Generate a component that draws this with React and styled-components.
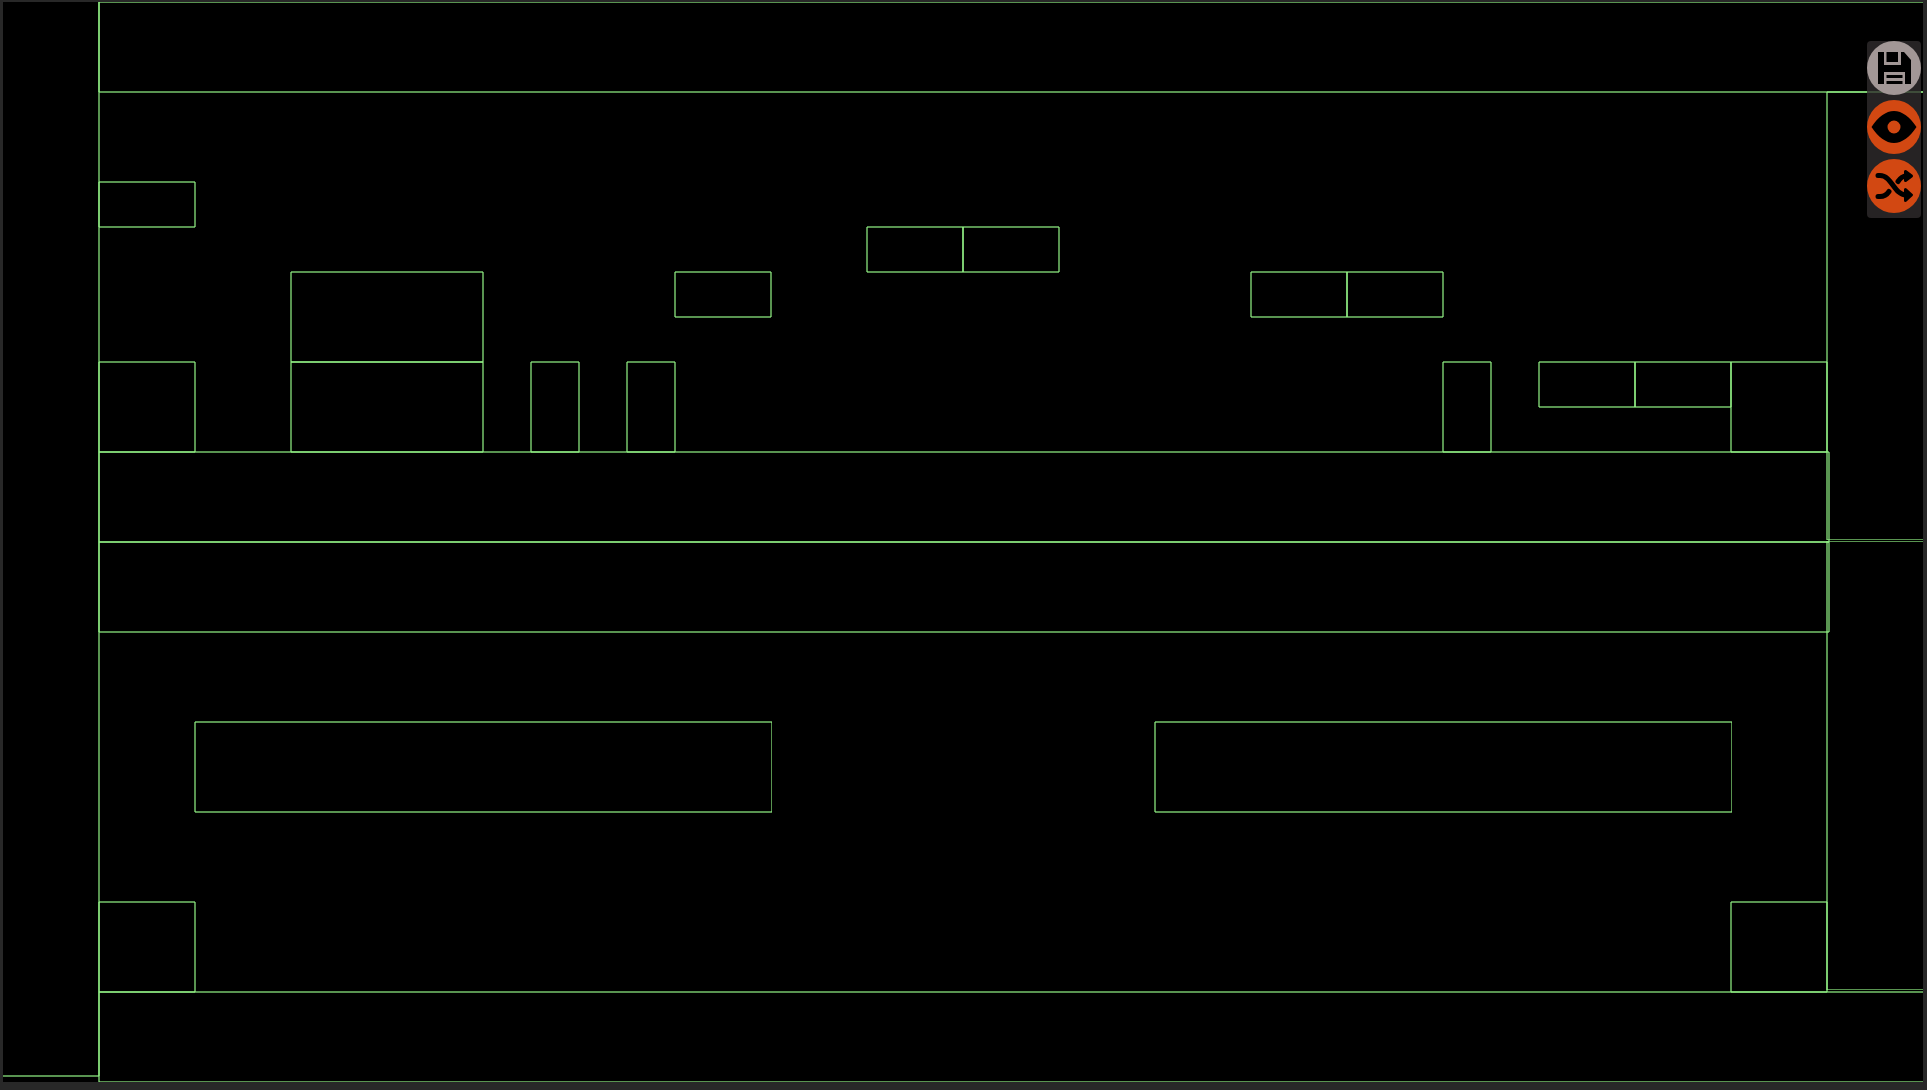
import React, { useState } from "react";
import styled, { createGlobalStyle } from "styled-components";

const GlobalStyle = createGlobalStyle`
  body {
    margin: 0;
    background: #282828;
    font-family: "Liberation Sans", Arial, sans-serif;
  }
`;

const Page = styled.main`
  position: relative;
  padding: 2px 4px 8px 3px;
`;

const Scene = styled.svg`
  display: block;
  width: 100%;
  height: auto;
  background: #000;
`;

const Edge = styled.line`
  stroke: #8fef82;
  stroke-opacity: 0.62;
`;

const Toolbar = styled.nav`
  position: absolute;
  top: 41px;
  right: 6px;
  display: flex;
  flex-direction: column;
  gap: 5px;
  padding-bottom: 5px;
  border-radius: 4px;
  background: rgba(48, 44, 45, 0.8);
`;

const RoundButton = styled.button`
  width: 54px;
  height: 54px;
  padding: 0;
  border: 0;
  border-radius: 50%;
  background: ${(p) => (p.$muted ? "#a29796" : "#d24812")};
  color: #000;
  cursor: pointer;
`;

const Icon = styled.svg`
  display: block;
  width: 54px;
  height: 54px;
`;

// Colliders as [left, top, right, bottom] in world units.
const COLLIDERS = [
  [-96, -96, 96, 1074],
  [96, 0, 2016, 90],
  [1824, 90, 2016, 537.5],
  [1824, 539.5, 2016, 987.5],
  [96, 990, 2016, 1080],
  [96, 180, 192, 225],
  [96, 360, 192, 450],
  [288, 270, 480, 360],
  [288, 360, 480, 450],
  [528, 360, 576, 450],
  [624, 360, 672, 450],
  [672, 270, 768, 315],
  [864, 225, 960, 270],
  [960, 225, 1056, 270],
  [1248, 270, 1344, 315],
  [1344, 270, 1440, 315],
  [1440, 360, 1488, 450],
  [1536, 360, 1632, 405],
  [1632, 360, 1728, 405],
  [1728, 360, 1824, 450],
  [96, 450, 1826, 540],
  [96, 540, 1826, 630],
  [192, 720, 768.5, 810],
  [1152, 720, 1728.5, 810],
  [96, 900, 192, 990],
  [1728, 900, 1824, 990],
];

// Edges on whole units cover the pixel on either side; others cover one.
const thickness = (v) => (Number.isInteger(v) ? 2 : 1);

function Collider({ box: [l, t, r, b] }) {
  const right = Math.ceil(r);
  const bottom = Math.ceil(b);
  const top = Math.floor(t);
  return (
    <g>
      <Edge x1={l} x2={right} y1={t} y2={t} strokeWidth={thickness(t)} />
      <Edge x1={r} x2={r} y1={top} y2={bottom} strokeWidth={thickness(r)} />
      <Edge x1={l} x2={right} y1={b} y2={b} strokeWidth={thickness(b)} />
      <Edge x1={l} x2={l} y1={top} y2={bottom} strokeWidth={thickness(l)} />
    </g>
  );
}

function SaveIcon() {
  return (
    <Icon viewBox="0 0 54 54" aria-hidden="true">
      <path
        fillRule="evenodd"
        d="M11 11h6v13h17V11h3l7 8v24h-6V31H17v12h-6z M19.500 11h11.500v10H19.500z M19.500 34h16v3H19.500z M19.500 40h16v3H19.500z"
      />
    </Icon>
  );
}

function EyeIcon() {
  return (
    <Icon viewBox="0 0 54 54" aria-hidden="true">
      <path
        fillRule="evenodd"
        d="M4.500 27C11 17 19 11 27 11s16 6 22.500 16C43 37 35 43 27 43S11 37 4.500 27z M27 20.500a6.500 6.500 0 1 0 0 13a6.500 6.500 0 1 0 0-13z"
      />
    </Icon>
  );
}

function ShuffleIcon() {
  return (
    <Icon viewBox="0 0 54 54" aria-hidden="true">
      <g fill="none" stroke="currentColor" strokeWidth="5" strokeLinecap="round">
        <path d="M11 16.500h2C25 16.500 27 36 39 36" />
        <path d="M11 37.500h2c4 0 7-2 9-5" />
        <path d="M31 22.500c2-3 5-5.500 8-5.500" />
      </g>
      <g stroke="currentColor" strokeWidth="3" strokeLinejoin="round">
        <path d="M38.500 12.500v9l6-4.500z" />
        <path d="M38.500 30.500v11l6-5.500z" />
      </g>
    </Icon>
  );
}

export default function App() {
  const [visible, setVisible] = useState(true);
  return (
    <>
      <GlobalStyle />
      <Page>
        <Scene viewBox="0 0 1920 1080" role="img" aria-label="Level colliders">
          {visible && COLLIDERS.map((box) => <Collider key={box.join()} box={box} />)}
        </Scene>
        <Toolbar aria-label="Level tools">
          <RoundButton type="button" aria-label="Save" $muted>
            <SaveIcon />
          </RoundButton>
          <RoundButton type="button" aria-label="Toggle colliders" onClick={() => setVisible(!visible)}>
            <EyeIcon />
          </RoundButton>
          <RoundButton type="button" aria-label="Shuffle">
            <ShuffleIcon />
          </RoundButton>
        </Toolbar>
      </Page>
    </>
  );
}
